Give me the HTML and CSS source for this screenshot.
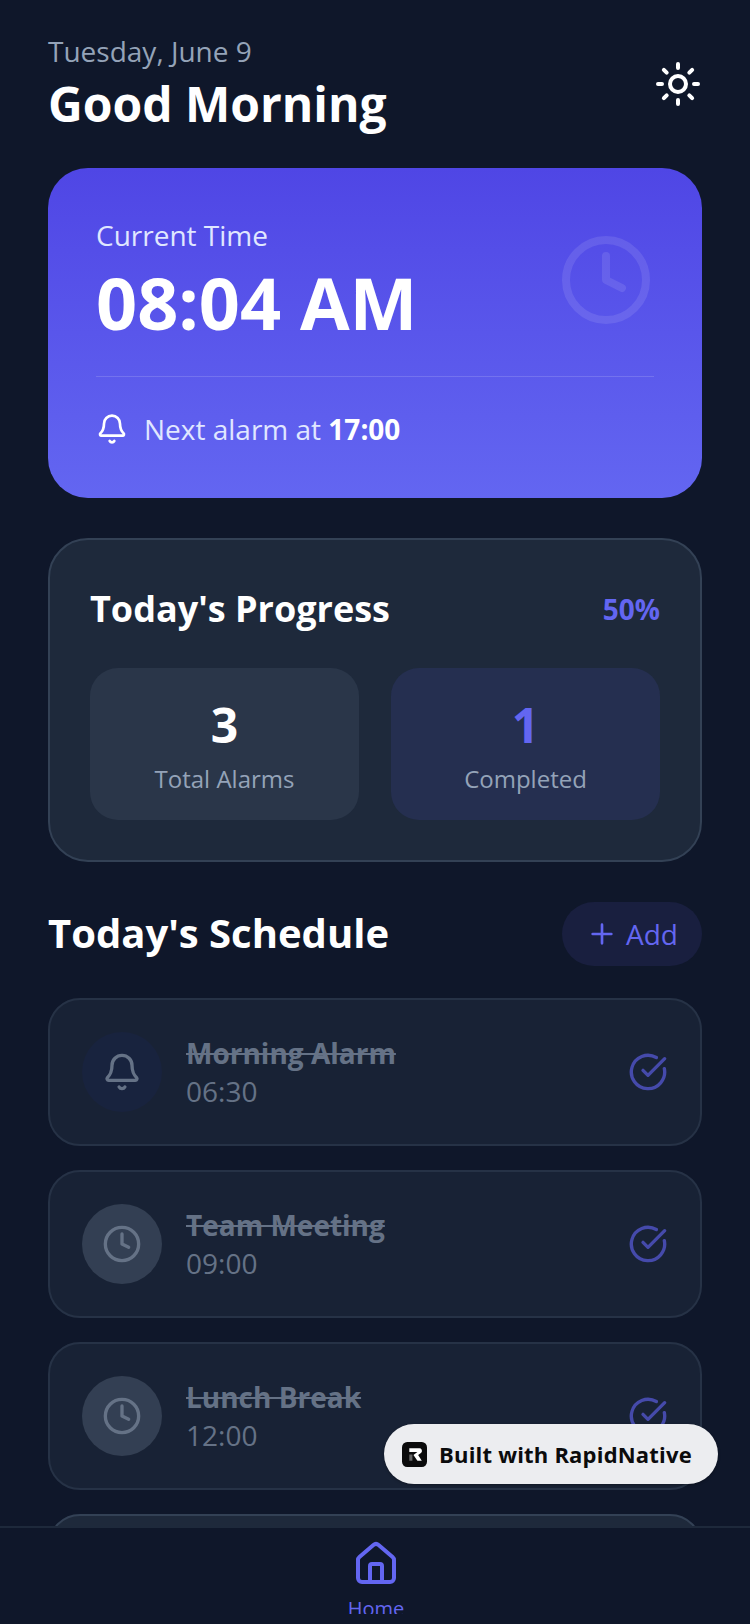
FILE: index.html
```html
<!DOCTYPE html>
<html lang="en">
<head>
    <meta charset="UTF-8">
    <title>Good Morning</title>
    <link rel="stylesheet" href="styles.css">
</head>
<body>
    <div class="screen">
        <main class="content">
            <header class="top">
                <div>
                    <p class="date">Tuesday, June 9</p>
                    <h1>Good Morning</h1>
                </div>
                <svg class="icon sun" viewBox="0 0 24 24"><circle cx="12" cy="12" r="4"/><path d="M12 2v2M12 20v2M4.93 4.93l1.41 1.41M17.66 17.66l1.41 1.41M2 12h2M20 12h2M6.34 17.66l-1.41 1.41M19.07 4.93l-1.41 1.41"/></svg>
            </header>

            <section class="time-card">
                <div class="time-top">
                    <div>
                        <p class="time-label">Current Time</p>
                        <p class="time-value">08:04 AM</p>
                    </div>
                    <svg class="icon time-clock" viewBox="0 0 24 24"><circle cx="12" cy="12" r="10"/><path d="M12 6v6l4 2"/></svg>
                </div>
                <div class="next-alarm">
                    <svg class="icon next-bell" viewBox="0 0 24 24"><path d="M10.268 21a2 2 0 0 0 3.464 0"/><path d="M3.262 15.326A1 1 0 0 0 4 17h16a1 1 0 0 0 .74-1.673C19.41 13.956 18 12.499 18 8A6 6 0 0 0 6 8c0 4.499-1.411 5.956-2.738 7.326"/></svg>
                    <span>Next alarm at <b>17:00</b></span>
                </div>
            </section>

            <section class="progress-card">
                <div class="progress-head">
                    <h2>Today's Progress</h2>
                    <span class="percent">50%</span>
                </div>
                <div class="stats">
                    <div class="stat">
                        <span class="stat-num">3</span>
                        <span class="stat-label">Total Alarms</span>
                    </div>
                    <div class="stat stat-done">
                        <span class="stat-num">1</span>
                        <span class="stat-label">Completed</span>
                    </div>
                </div>
            </section>

            <div class="schedule-head">
                <h2>Today's Schedule</h2>
                <button class="add">
                    <svg class="icon add-plus" viewBox="0 0 24 24"><path d="M5 12h14M12 5v14"/></svg>
                    Add
                </button>
            </div>

            <div class="list">
                <div class="item done">
                    <div class="item-icon alarm">
                        <svg class="icon" viewBox="0 0 24 24"><path d="M10.268 21a2 2 0 0 0 3.464 0"/><path d="M3.262 15.326A1 1 0 0 0 4 17h16a1 1 0 0 0 .74-1.673C19.41 13.956 18 12.499 18 8A6 6 0 0 0 6 8c0 4.499-1.411 5.956-2.738 7.326"/></svg>
                    </div>
                    <div class="item-text">
                        <p class="item-title">Morning Alarm</p>
                        <p class="item-time">06:30</p>
                    </div>
                    <svg class="icon check" viewBox="0 0 24 24"><path d="M21.801 10A10 10 0 1 1 17 3.335"/><path d="m9 11 3 3L22 4"/></svg>
                </div>
                <div class="item done">
                    <div class="item-icon">
                        <svg class="icon" viewBox="0 0 24 24"><circle cx="12" cy="12" r="10"/><path d="M12 6v6l4 2"/></svg>
                    </div>
                    <div class="item-text">
                        <p class="item-title">Team Meeting</p>
                        <p class="item-time">09:00</p>
                    </div>
                    <svg class="icon check" viewBox="0 0 24 24"><path d="M21.801 10A10 10 0 1 1 17 3.335"/><path d="m9 11 3 3L22 4"/></svg>
                </div>
                <div class="item done">
                    <div class="item-icon">
                        <svg class="icon" viewBox="0 0 24 24"><circle cx="12" cy="12" r="10"/><path d="M12 6v6l4 2"/></svg>
                    </div>
                    <div class="item-text">
                        <p class="item-title">Lunch Break</p>
                        <p class="item-time">12:00</p>
                    </div>
                    <svg class="icon check" viewBox="0 0 24 24"><path d="M21.801 10A10 10 0 1 1 17 3.335"/><path d="m9 11 3 3L22 4"/></svg>
                </div>
                <div class="item"></div>
            </div>
        </main>

        <nav class="tabbar">
            <svg class="icon home" viewBox="0 0 24 24"><path d="M15 21v-8a1 1 0 0 0-1-1h-4a1 1 0 0 0-1 1v8"/><path d="M3 10a2 2 0 0 1 .709-1.528l7-5.999a2 2 0 0 1 2.582 0l7 5.999A2 2 0 0 1 21 10v9a2 2 0 0 1-2 2H5a2 2 0 0 1-2-2z"/></svg>
            <span class="home-label">Home</span>
        </nav>

        <div class="built">
            <svg class="built-logo" viewBox="0 0 24 24"><rect width="24" height="24" rx="5" fill="#0b0b0c"/><path d="M7 6h9.500a2.500 2.500 0 0 1 2 4.200L15.500 12.500l3.500 5.500h-4.200L11 12.500l3.800-3H7z" fill="#fff"/><path d="M7 12h3v6H7z" fill="#666"/></svg>
            <span>Built with RapidNative</span>
        </div>
    </div>
</body>
</html>
```

FILE: styles.css
```css
* {
    box-sizing: border-box;
}

body {
    margin: 0;
    background: #0f172a;
    font-family: "Open Sans", "Noto Sans", sans-serif;
    color: #fff;
}

p, h1, h2 {
    margin: 0;
}

.icon {
    display: block;
    width: 40px;
    height: 40px;
    fill: none;
    stroke: currentColor;
    stroke-width: 2;
    stroke-linecap: round;
    stroke-linejoin: round;
    flex: none;
}

.screen {
    position: relative;
    width: 750px;
    height: 1624px;
    display: flex;
    flex-direction: column;
    overflow: hidden;
}

.content {
    flex: 1;
    min-height: 0;
    overflow: hidden;
    padding: 32px 48px 0;
}

/* header */
.top {
    display: flex;
    justify-content: space-between;
    align-items: center;
    margin-bottom: 32px;
}

.date {
    font-size: 28px;
    line-height: 38px;
    margin-bottom: 2px;
    color: #94a3b8;
}

h1 {
    font-size: 48px;
    line-height: 64px;
    font-weight: 700;
}

.sun {
    width: 48px;
    height: 48px;
}

/* time card */
.time-card {
    height: 330px;
    padding: 48px;
    border-radius: 40px;
    background: linear-gradient(180deg, #4f46e5, #6366f1);
}

.time-top {
    display: flex;
    justify-content: space-between;
    align-items: flex-start;
    padding-bottom: 26px;
    border-bottom: 1px solid rgba(255,255,255,0.15);
}

.time-label {
    font-size: 28px;
    line-height: 38px;
    color: #e0e7ff;
}

.time-value {
    font-size: 72px;
    line-height: 96px;
    font-weight: 700;
}

.time-clock {
    width: 96px;
    height: 96px;
    margin-top: 16px;
    color: rgba(255,255,255,0.1);
}

.next-alarm {
    display: flex;
    align-items: center;
    gap: 16px;
    margin-top: 32px;
    font-size: 28px;
    line-height: 40px;
    color: #e0e7ff;
}

.next-alarm b {
    color: #fff;
}

.next-bell {
    width: 32px;
    height: 32px;
    color: #fff;
}

/* progress */
.progress-card {
    margin-top: 40px;
    height: 324px;
    padding: 40px;
    background: #1e293b;
    border: 2px solid #334155;
    border-radius: 40px;
}

.progress-head {
    display: flex;
    justify-content: space-between;
    align-items: center;
    padding-top: 1px;
    margin-bottom: 31px;
}

h2 {
    font-size: 36px;
    line-height: 56px;
    font-weight: 700;
}

.percent {
    font-size: 28px;
    font-weight: 700;
    color: #6366f1;
}

.stats {
    display: flex;
    gap: 32px;
}

.stat {
    flex: 1;
    height: 152px;
    padding-top: 2px;
    display: flex;
    flex-direction: column;
    align-items: center;
    justify-content: center;
    border-radius: 28px;
    background: #2a3649;
}

.stat-done {
    background: #252f50;
}

.stat-num {
    font-size: 48px;
    line-height: 60px;
    font-weight: 700;
}

.stat-done .stat-num {
    color: #6366f1;
}

.stat-label {
    margin-top: 8px;
    font-size: 24px;
    line-height: 32px;
    color: #94a3b8;
}

/* schedule */
.schedule-head {
    display: flex;
    justify-content: space-between;
    align-items: center;
    margin-top: 40px;
    margin-bottom: 32px;
}

.schedule-head h2 {
    font-size: 40px;
    padding-bottom: 2px;
}

.add {
    display: flex;
    align-items: center;
    gap: 8px;
    height: 64px;
    padding: 0 24px;
    border: 0;
    border-radius: 32px;
    background: #191f3f;
    color: #6366f1;
    font: 28px "Open Sans", sans-serif;
}

.add-plus {
    width: 32px;
    height: 32px;
}

.list {
    display: flex;
    flex-direction: column;
    gap: 24px;
}

.item {
    display: flex;
    align-items: center;
    gap: 24px;
    height: 148px;
    padding: 0 32px;
    background: #1e293b;
    border: 2px solid #334155;
    border-radius: 32px;
    flex: none;
}

.item.done {
    opacity: 0.65;
}

.item-icon {
    width: 80px;
    height: 80px;
    display: flex;
    align-items: center;
    justify-content: center;
    border-radius: 50%;
    background: #475569;
    color: #94a3b8;
    flex: none;
}

.item-icon.alarm {
    background: #1e2a4a;
}

.item-text {
    flex: 1;
}

.item-title {
    font-size: 28px;
    line-height: 36px;
    font-weight: 700;
    color: #94a3b8;
    text-decoration: line-through;
}

.item-time {
    margin-top: 2px;
    font-size: 28px;
    line-height: 36px;
    color: #94a3b8;
}

.check {
    color: #6366f1;
}

/* bottom bar */
.tabbar {
    height: 98px;
    flex: none;
    display: flex;
    flex-direction: column;
    align-items: center;
    padding: 12px 0 0 2px;
    background: #0f172a;
    border-top: 2px solid #1e293b;
    overflow: hidden;
    color: #6366f1;
}

.home {
    width: 48px;
    height: 48px;
}

.home-label {
    display: block;
    height: 19px;
    margin-top: 7px;
    font-size: 20px;
    line-height: 28px;
    overflow: hidden;
}

.built {
    position: absolute;
    left: 384px;
    top: 1424px;
    width: 334px;
    height: 60px;
    display: flex;
    align-items: center;
    gap: 12px;
    padding-left: 18px;
    border-radius: 30px;
    background: #ecedf0;
    box-shadow: 0 1px 3px rgba(0,0,0,0.3);
    color: #0b0b0c;
    font-size: 22px;
    font-weight: 700;
    letter-spacing: 0.2px;
    white-space: nowrap;
}

.built-logo {
    width: 25px;
    height: 25px;
    flex: none;
}
```
